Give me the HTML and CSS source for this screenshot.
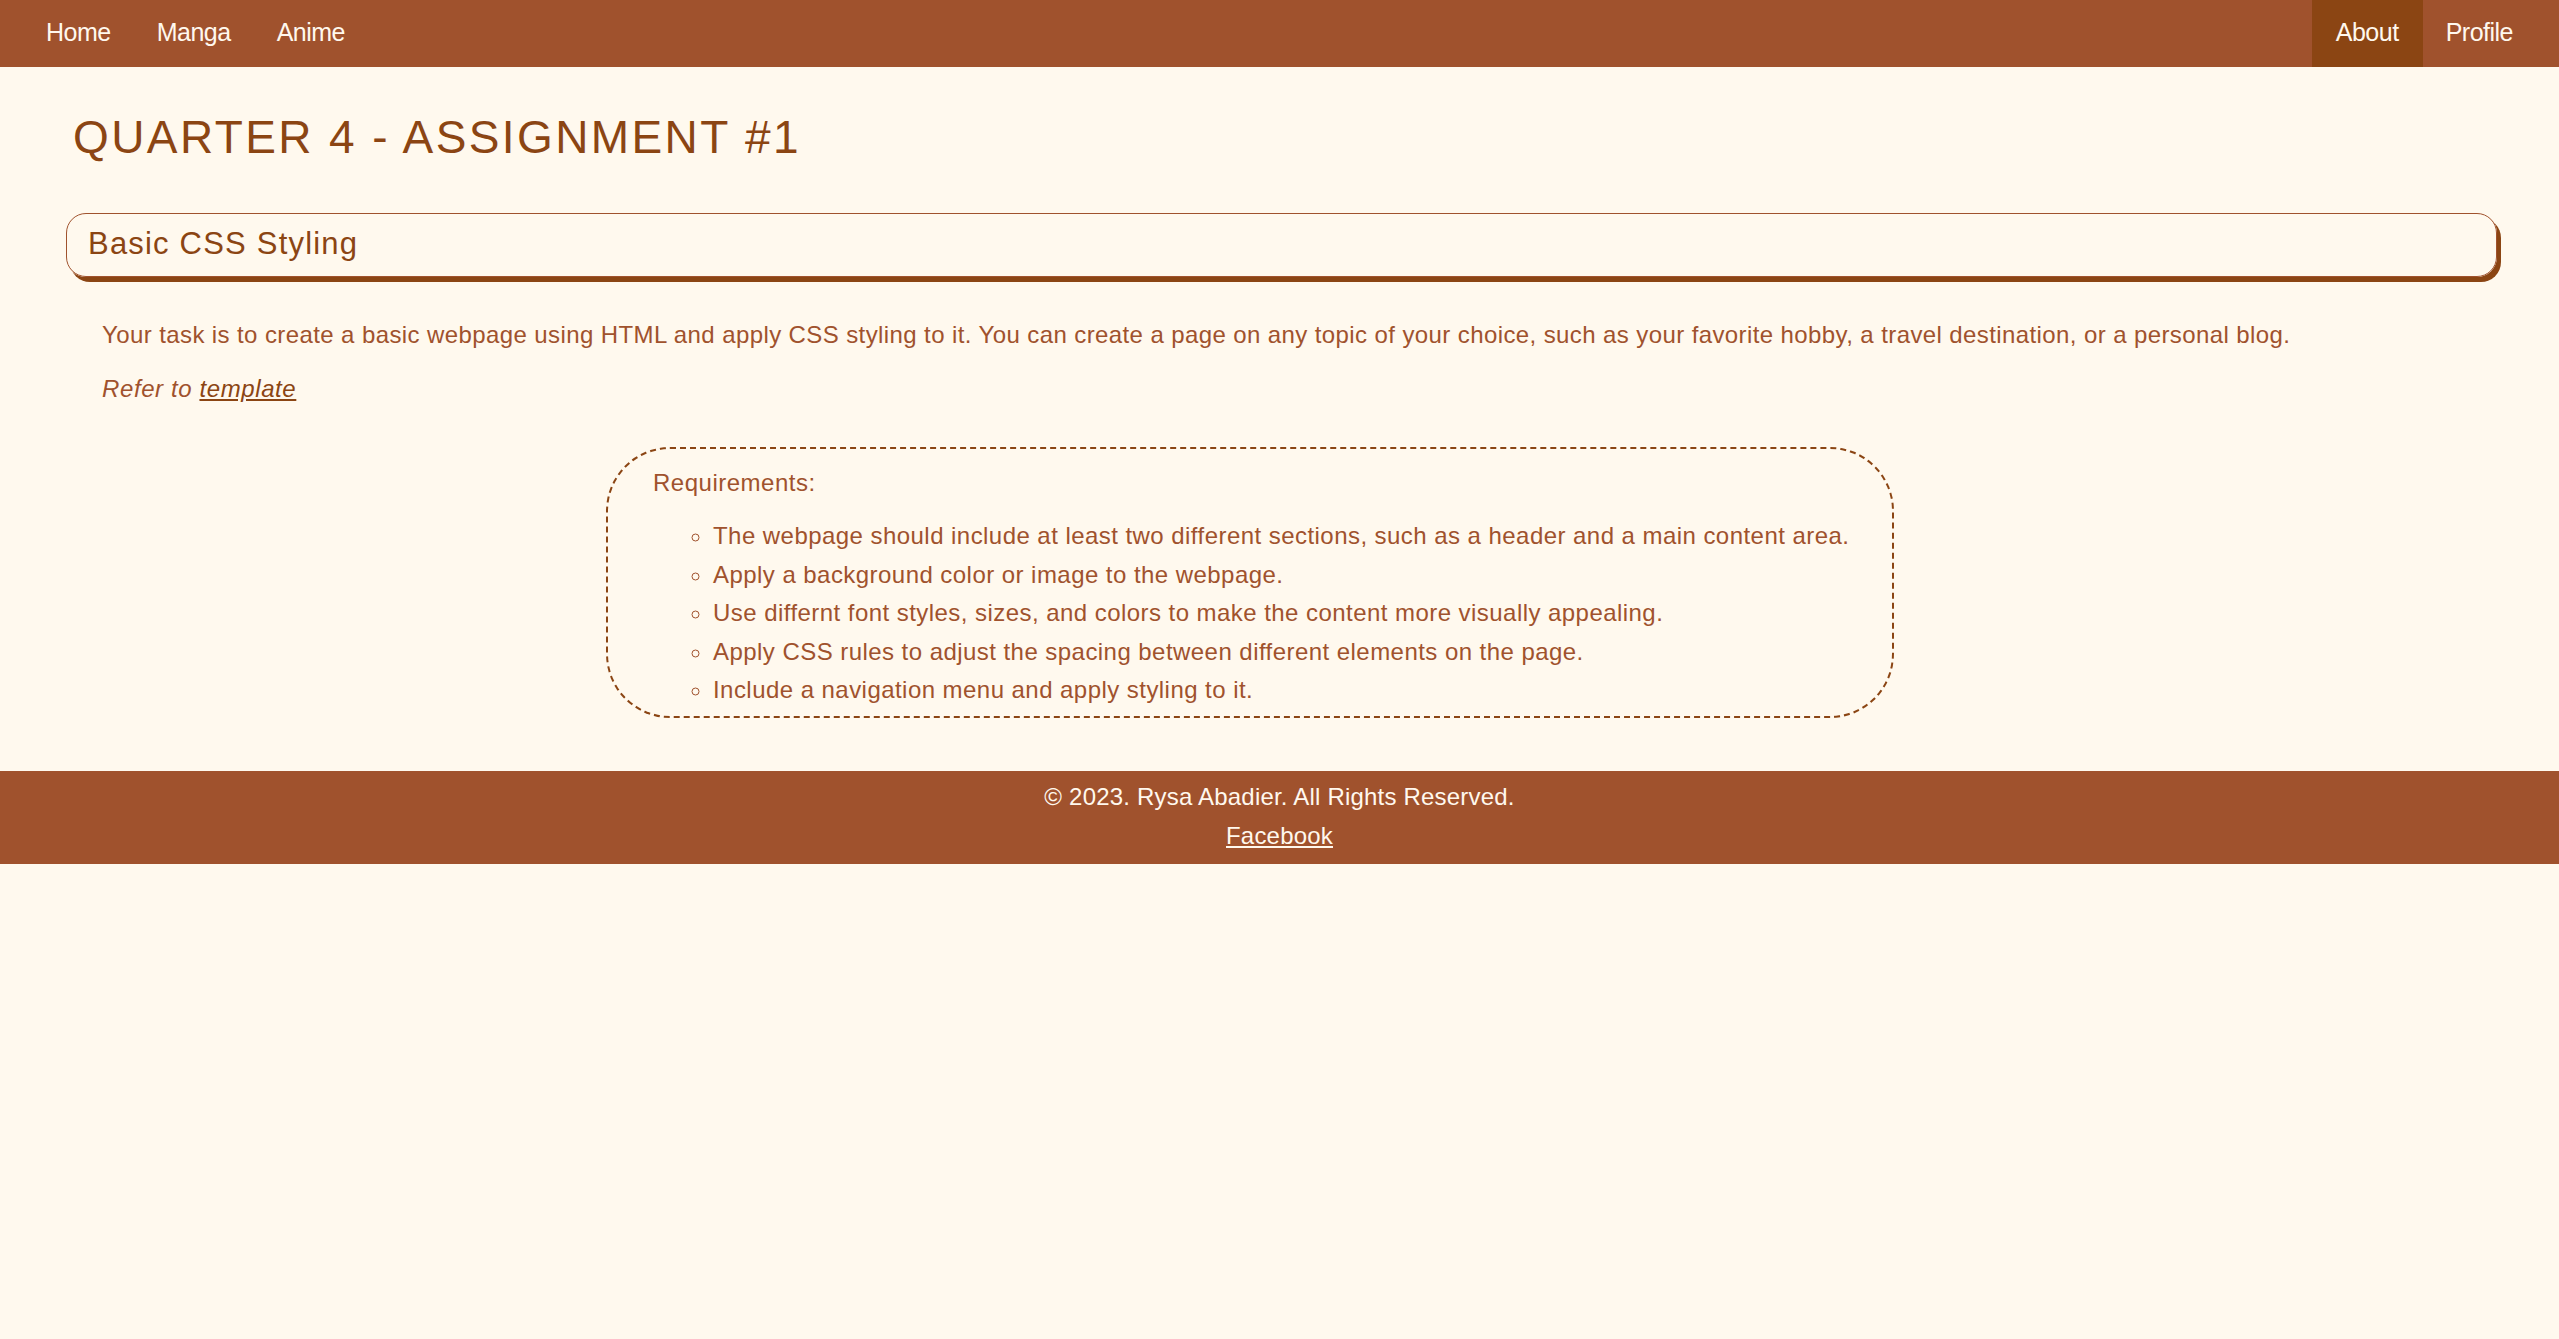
FILE: index.html
```html
<!DOCTYPE html>
<html lang="en">
<head>
<meta charset="utf-8">
<title>Quarter 4 - Assignment #1</title>
<link rel="stylesheet" href="styles.css">
</head>
<body>
<nav class="topnav">
  <div class="nav-left">
    <a href="#" class="nav-link">Home</a>
    <a href="#" class="nav-link">Manga</a>
    <a href="#" class="nav-link">Anime</a>
  </div>
  <div class="nav-right">
    <a href="#" class="nav-link active">About</a>
    <a href="#" class="nav-link">Profile</a>
  </div>
</nav>
<main class="content">
  <h1 class="page-title">QUARTER 4 - ASSIGNMENT #1</h1>
  <h2 class="section-title">Basic CSS Styling</h2>
  <section class="section-body">
    <p class="desc">Your task is to create a basic webpage using HTML and apply CSS styling to it. You can create a page on any topic of your choice, such as your favorite hobby, a travel destination, or a personal blog.</p>
    <p class="refer"><em>Refer to <a href="#" class="template-link">template</a></em></p>
    <div class="req-box">
      <p class="req-title">Requirements:</p>
      <ul class="req-list">
        <li>The webpage should include at least two different sections, such as a header and a main content area.</li>
        <li>Apply a background color or image to the webpage.</li>
        <li>Use differnt font styles, sizes, and colors to make the content more visually appealing.</li>
        <li>Apply CSS rules to adjust the spacing between different elements on the page.</li>
        <li>Include a navigation menu and apply styling to it.</li>
      </ul>
    </div>
  </section>
</main>
<footer class="site-footer">
  <p class="footer-line">© 2023. Rysa Abadier. All Rights Reserved.</p>
  <p class="footer-line"><a href="#" class="footer-link">Facebook</a></p>
</footer>
</body>
</html>
```
FILE: styles.css
```css
html, body {
  margin: 0;
  padding: 0;
}
body {
  background: #fff9ee;
  font-family: "Liberation Sans", Arial, sans-serif;
  color: #a0522d;
  min-height: 1339px;
}
.topnav {
  display: flex;
  justify-content: space-between;
  background: #a0522d;
  height: 67px;
  padding: 0 23px 0 23px;
}
.nav-left, .nav-right {
  display: flex;
}
.nav-link {
  display: flex;
  align-items: center;
  padding: 0 23px 2px;
  color: #fff8ee;
  text-decoration: none;
  font-size: 25px;
  letter-spacing: -0.5px;
}
.nav-link.active {
  background: #8b4513;
  padding: 0 24px 2px;
}
.content {
  padding: 0 62px 0 66px;
}
.page-title {
  margin: 43px 0 0 7px;
  font-size: 46px;
  line-height: 55px;
  font-weight: normal;
  letter-spacing: 2.4px;
  color: #8b4513;
}
.section-title {
  margin: 48px 0 0 0;
  padding: 11px 21px 14px;
  font-size: 31px;
  line-height: 37px;
  font-weight: normal;
  letter-spacing: 1.2px;
  color: #8b4513;
  border: 1px solid #a0522d;
  border-radius: 20px;
  box-shadow: 4px 5px 0 #8b4513;
}
.section-body {
  padding: 0 36px;
}
.desc {
  margin: 43px 0 0 0;
  font-size: 24px;
  line-height: 29px;
  letter-spacing: 0.4px;
}
.refer {
  margin: 25px 0 0 0;
  font-size: 24px;
  line-height: 29px;
  letter-spacing: 0.6px;
}
.template-link {
  color: #8b4513;
}
.req-box {
  width: fit-content;
  margin: 44px 0 0 504px;
  padding: 19px 43px 6px 45px;
  border: 2px dashed #8b4513;
  border-radius: 64px;
}
.req-title {
  margin: 0;
  font-size: 24px;
  line-height: 29px;
  letter-spacing: 0.5px;
}
.req-list {
  margin: 20px 0 0 0;
  padding-left: 60px;
  list-style-type: circle;
  font-size: 24px;
  line-height: 38.5px;
  letter-spacing: 0.45px;
}
.site-footer {
  margin-top: 53px;
  background: #a0522d;
  padding: 6px 0 9px;
  text-align: center;
  color: #fff8ee;
}
.footer-line {
  margin: 0;
  font-size: 24px;
  line-height: 39px;
  letter-spacing: 0.2px;
}
.footer-link {
  color: #fff8ee;
}
```
